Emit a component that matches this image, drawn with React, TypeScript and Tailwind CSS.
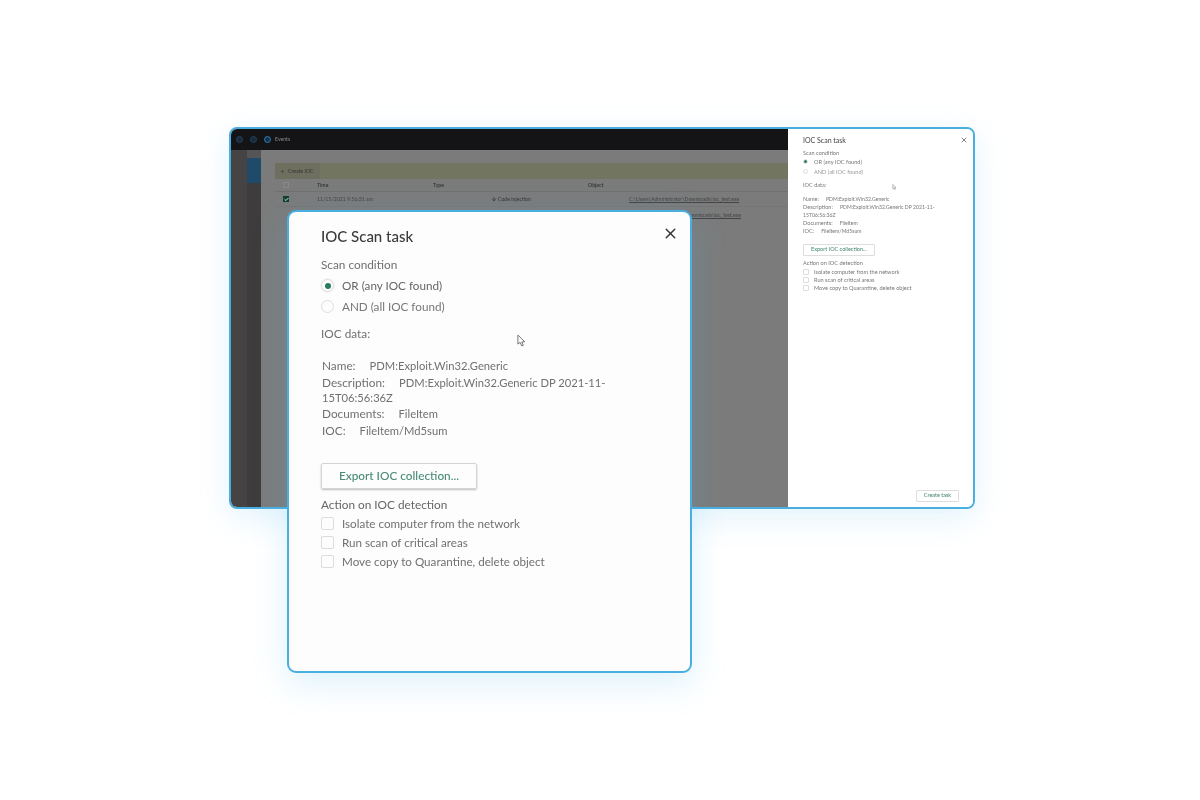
import { X, Plus, ArrowDown, Check } from "lucide-react";

const font = "font-['Lato','Noto_Sans',sans-serif]";

const dataRows = [
  { label: "Name:", value: "PDM:Exploit.Win32.Generic" },
  { label: "Description:", value: "PDM:Exploit.Win32.Generic DP 2021-11-15T06:56:36Z" },
  { label: "Documents:", value: "FileItem" },
  { label: "IOC:", value: "FileItem/Md5sum" },
];

const actions = [
  "Isolate computer from the network",
  "Run scan of critical areas",
  "Move copy to Quarantine, delete object",
];

const Cursor = ({ className }: { className: string }) => (
  <svg viewBox="0 0 10 14" className={className} fill="white" stroke="#666" strokeWidth="1">
    <path d="M1 1 L1 11 L3.4 9 L5.2 13 L7 12.2 L5.3 8.6 L8.6 8.4 Z" />
  </svg>
);

const SidePanel = () => (
  <div className="relative flex w-[185px] shrink-0 flex-col bg-white pl-[15px] pr-[30px] pt-[7px] text-[5.6px] leading-[7.5px] text-[#777] blur-[0.35px]">
    <div className="text-[7px] leading-[9px] text-[#444]">IOC Scan task</div>
    <X className="absolute right-[5px] top-[7px] h-[8px] w-[8px] text-[#444]" strokeWidth={2} />
    <div className="mt-[4px]">Scan condition</div>
    <div className="mt-[1px] flex items-center gap-[6px]">
      <span className="flex h-[5px] w-[5px] items-center justify-center rounded-full border border-[#ddd]">
        <span className="h-[3px] w-[3px] rounded-full bg-[#2b7a62]" />
      </span>
      OR (any IOC found)
    </div>
    <div className="mt-[3px] flex items-center gap-[6px] text-[#999]">
      <span className="h-[5px] w-[5px] rounded-full border border-[#ddd]" />
      AND (all IOC found)
    </div>
    <div className="mt-[5px]">IOC data:</div>
    <div className="mt-[7px] w-[140px] leading-[7px]">
      {dataRows.map((r) => (
        <div key={r.label}>
          <span className="mr-[7px]">{r.label}</span>
          <span className="text-[5.15px]">{r.value}</span>
        </div>
      ))}
    </div>
    <button className="mt-[9px] h-[12px] w-[72px] rounded-[1px] border border-[#ddd] text-[5.5px] text-[#3f8270]">
      Export IOC collection...
    </button>
    <div className="mt-[3px]">Action on IOC detection</div>
    <div className="mt-[1.5px] flex flex-col gap-[0.5px]">
      {actions.map((a) => (
        <div key={a} className="flex items-center gap-[5px]">
          <span className="h-[6px] w-[6px] rounded-[1px] border border-[#ddd]" />
          {a}
        </div>
      ))}
    </div>
    <button className="absolute bottom-[5px] right-[14px] h-[12px] w-[43px] rounded-[1px] border border-[#ddd] text-[5.5px] text-[#3f8270]">
      Create task
    </button>
    <Cursor className="absolute left-[104px] top-[55px] h-[6px] w-[5px]" />
  </div>
);

const EventsTable = () => (
  <div className="flex-1 bg-[#7b7b7b] pl-[14px] pt-[13px] text-[5.2px] leading-[7px] text-[#333] blur-[0.35px]">
    <div className="flex h-[16px] bg-[#72755f]">
      <div className="flex w-[45px] items-center gap-[3px] bg-[#6e6f5e] pl-[5px]">
        <Plus className="h-[5px] w-[5px]" />
        Create IOC
      </div>
    </div>
    <div className="flex h-[13px] items-center border-b border-[#707070] font-semibold">
      <span className="ml-[8px] mr-[28px] h-[6px] w-[6px] border border-[#888]" />
      <span className="w-[116px]">Time</span>
      <span className="w-[155px]">Type</span>
      <span>Object</span>
    </div>
    <div className="flex h-[15px] items-center border-b border-[#757575]">
      <span className="ml-[8px] mr-[20px] flex h-[6px] w-[6px] items-center justify-center bg-[#123f34]">
        <Check className="h-[5px] w-[5px] text-white" strokeWidth={4} />
      </span>
      <span className="ml-[8px] w-[174px] text-[#444]">11/15/2021 9:56:31 am</span>
      <span className="flex w-[138px] items-center text-[#333]">
        <ArrowDown className="mr-[1px] h-[6px] w-[6px]" strokeWidth={3} />
        Code injection
      </span>
      <span className="text-[#444] underline">C:\Users\Administrator\Downloads\ioc_test.exe</span>
    </div>
    <div className="flex h-[16px] items-center justify-end pr-[47px]">
      <span className="text-[#444] underline">C:\Users\Administrator\Downloads\ioc_test.exe</span>
    </div>
  </div>
);

const Modal = () => (
  <div className="absolute left-[56px] top-[81px] h-[463px] w-[405px] rounded-[9px] border-2 border-[#49aee0] bg-[#fdfdfe] pl-[32px] pr-[11px] pt-[13px] shadow-[0_10px_34px_rgba(90,190,240,0.22)]">
    <div className="blur-[0.25px]">
      <div className="flex items-center justify-between">
        <h2 className="text-[15px] font-medium leading-[22px] text-[#3a3a3a]">IOC Scan task</h2>
        <X className="-mt-[6px] h-[17px] w-[17px] text-[#333]" strokeWidth={2} />
      </div>
      <div className="mt-[10px] text-[11.8px] leading-[16px] text-[#707070]">Scan condition</div>
      <div className="mt-[2px] flex h-[21px] items-center gap-[8px] text-[11.7px] text-[#666]">
        <span className="flex h-[13px] w-[13px] items-center justify-center rounded-full border border-[#dcdcdc] shadow-[0_0_2px_#ddd]">
          <span className="h-[6px] w-[6px] rounded-full bg-[#2b7a62]" />
        </span>
        OR (any IOC found)
      </div>
      <div className="flex h-[21px] items-center gap-[8px] text-[11.7px] text-[#777]">
        <span className="h-[13px] w-[13px] rounded-full border border-[#dcdcdc]" />
        AND (all IOC found)
      </div>
      <div className="mt-[9px] text-[11.8px] leading-[16px] text-[#707070]">IOC data:</div>
      <div className="ml-[1px] mt-[16px] w-[300px] text-[11.8px] leading-[15px] text-[#707070]">
        {dataRows.map((r) => (
          <div key={r.label} className="mb-[1.5px]">
            <span className="mr-[14px]">{r.label}</span>
            <span className="text-[11.2px]">{r.value}</span>
          </div>
        ))}
      </div>
      <button className="mt-[24px] h-[26px] w-[156px] rounded-[2px] border border-[#d4d4d4] text-[11.8px] font-medium text-[#4a8a76] shadow-[0_1px_2px_rgba(0,0,0,0.25)]">
        Export IOC collection...
      </button>
      <div className="mt-[8px] text-[11.8px] leading-[16px] text-[#666]">Action on IOC detection</div>
      <div className="mt-[1px]">
        {actions.map((a) => (
          <div key={a} className="flex h-[19px] items-center gap-[8px] text-[11.65px] text-[#707070]">
            <span className="h-[13px] w-[13px] rounded-[2px] border border-[#dcdcdc]" />
            {a}
          </div>
        ))}
      </div>
    </div>
    <Cursor className="absolute left-[228px] top-[122px] h-[13px] w-[9px]" />
  </div>
);

export default function App() {
  return (
    <div className={`${font} min-h-[800px] bg-white pl-[229px] pt-[127px]`}>
      <div className="relative h-[382px] w-[746px] rounded-[8px] border-2 border-[#49aee0] shadow-[0_8px_30px_rgba(90,190,240,0.18)]">
        <div className="flex h-full overflow-hidden rounded-[6px]">
          <div className="flex min-w-0 flex-1 flex-col">
            <div className="flex h-[21px] shrink-0 items-center gap-[6px] bg-[#141416] pl-[5px] text-[5.2px] text-[#888] blur-[0.35px]">
              <span className="h-[7px] w-[7px] rounded-full border border-[#23425c] bg-[#1a2a38]" />
              <span className="ml-[1px] h-[7px] w-[7px] rounded-full border border-[#23425c] bg-[#1a2a38]" />
              <span className="ml-[1px] h-[7px] w-[7px] rounded-full border border-[#2f7fb0] bg-[#16324a]" />
              <span className="-ml-[2px]">Events</span>
            </div>
            <div className="flex min-h-0 flex-1">
              <div className="w-[16px] shrink-0 bg-[#454343]" />
              <div className="flex w-[14px] shrink-0 flex-col bg-[#3e3c3c]">
                <div className="h-[8px] bg-[#555]" />
                <div className="h-[25px] bg-[#1f4a6a]" />
              </div>
              <EventsTable />
            </div>
          </div>
          <SidePanel />
        </div>
        <Modal />
      </div>
    </div>
  );
}
